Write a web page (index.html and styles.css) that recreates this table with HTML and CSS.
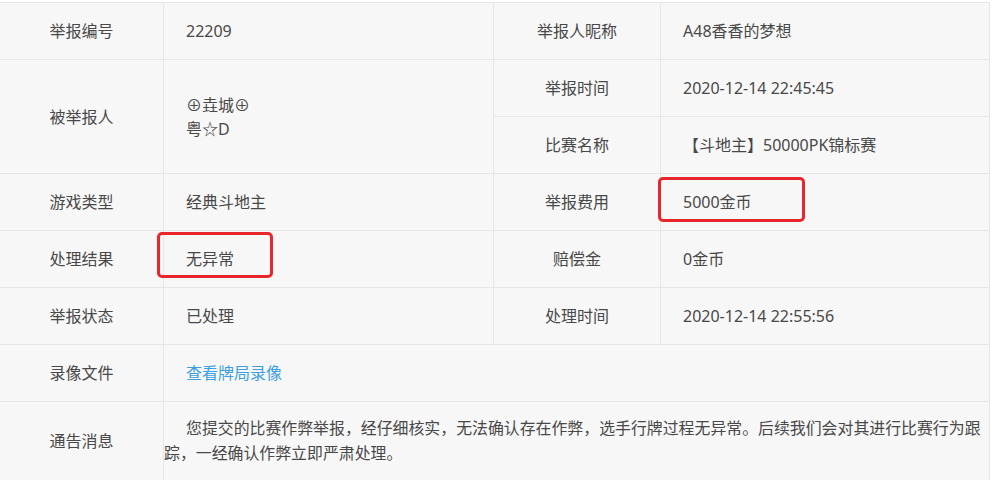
FILE: index.html
```html
<!DOCTYPE html>
<html lang="zh-CN">
<head>
<meta charset="utf-8">
<title>举报详情</title>
<link rel="stylesheet" href="styles.css">
</head>
<body>
<div class="wrap">
  <table class="detail">
    <colgroup>
      <col class="c1"><col class="c2"><col class="c3"><col class="c4">
    </colgroup>
    <tr>
      <td class="label">举报编号</td>
      <td class="value">22209</td>
      <td class="label">举报人昵称</td>
      <td class="value">A48香香的梦想</td>
    </tr>
    <tr>
      <td class="label" rowspan="2">被举报人</td>
      <td class="value multi" rowspan="2">⊕垚城⊕<br>粤☆D</td>
      <td class="label">举报时间</td>
      <td class="value">2020-12-14 22:45:45</td>
    </tr>
    <tr>
      <td class="label">比赛名称</td>
      <td class="value">【斗地主】50000PK锦标赛</td>
    </tr>
    <tr>
      <td class="label">游戏类型</td>
      <td class="value">经典斗地主</td>
      <td class="label">举报费用</td>
      <td class="value">5000金币</td>
    </tr>
    <tr>
      <td class="label">处理结果</td>
      <td class="value">无异常</td>
      <td class="label">赔偿金</td>
      <td class="value">0金币</td>
    </tr>
    <tr>
      <td class="label">举报状态</td>
      <td class="value">已处理</td>
      <td class="label">处理时间</td>
      <td class="value">2020-12-14 22:55:56</td>
    </tr>
    <tr>
      <td class="label">录像文件</td>
      <td class="value" colspan="3"><a class="link" href="#">查看牌局录像</a></td>
    </tr>
    <tr>
      <td class="label tall">通告消息</td>
      <td class="notice" colspan="3">您提交的比赛作弊举报，经仔细核实，无法确认存在作弊，选手行牌过程无异常。后续我们会对其进行比赛行为跟踪，一经确认作弊立即严肃处理。</td>
    </tr>
  </table>
  <div class="mark mark-result"></div>
  <div class="mark mark-fee"></div>
</div>
</body>
</html>
```

FILE: styles.css
```css
html, body {
  margin: 0;
  padding: 0;
  background: #ffffff;
}

body {
  font-family: "Noto Sans", "Noto Sans CJK SC", sans-serif;
  font-size: 16px;
  color: #484848;
}

.wrap {
  position: relative;
  padding-top: 2px;
  margin-left: -1px;
}

.detail {
  border-collapse: collapse;
  table-layout: fixed;
  width: 990px;
  background: #f7f7f7;
}

.c1 { width: 164px; }
.c2 { width: 330px; }
.c3 { width: 167px; }
.c4 { width: 329px; }

.detail td {
  border: 1px solid #e6e6e6;
  height: 56px;
  padding: 0;
  line-height: 24px;
  vertical-align: middle;
}

.detail tr:last-child td {
  border-bottom: none;
}

.label {
  text-align: center;
}

.value {
  padding-left: 22px !important;
  text-align: left;
}

.multi {
  line-height: 24px;
}

.link {
  color: #3c9fe0;
  text-decoration: none;
}

.tall {
  height: 78px !important;
}

.notice {
  font-size: 15.9px;
  line-height: 25px !important;
  text-indent: 22px;
  padding: 0 !important;
}

.mark {
  position: absolute;
  border: 3px solid #e8262b;
  border-radius: 5px;
  box-sizing: border-box;
}

.mark-result {
  left: 158px;
  top: 232px;
  width: 116px;
  height: 46px;
}

.mark-fee {
  left: 659px;
  top: 177px;
  width: 147px;
  height: 45px;
}
```
